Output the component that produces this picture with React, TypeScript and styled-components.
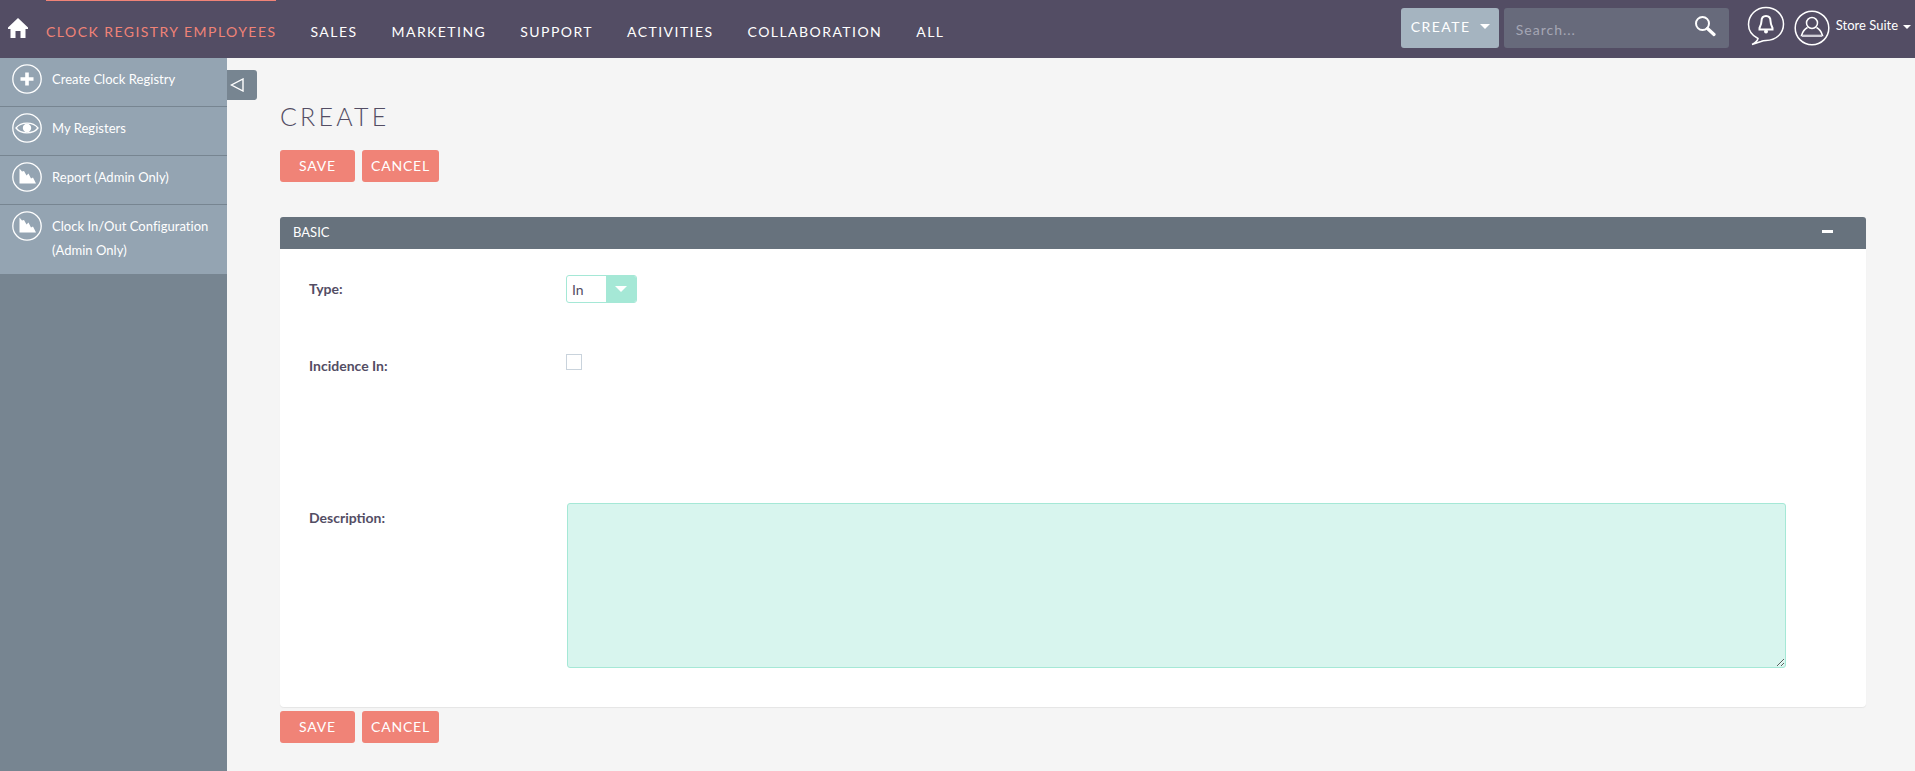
import React from 'react';
import styled, { createGlobalStyle } from 'styled-components';

const GlobalStyle = createGlobalStyle`
    html, body {
        margin: 0;
        padding: 0;
        background: #f5f5f5;
        font-family: Lato, "Liberation Sans", sans-serif;
    }
    * {
        box-sizing: border-box;
    }
`;

const Page = styled.div`
    width: 1915px;
    height: 771px;
    display: flex;
    flex-direction: column;
    overflow: hidden;
`;

const TopBar = styled.header`
    height: 58px;
    flex-shrink: 0;
    background: #534d64;
    display: flex;
    align-items: stretch;
`;

const HomeLink = styled.a`
    width: 46px;
    padding: 18px 0 0 8px;
    flex-shrink: 0;
`;

const NavList = styled.nav`
    display: flex;
    align-items: stretch;
    flex: 1;
`;

const NavItem = styled.a<{ $active?: boolean }>`
    display: block;
    height: 58px;
    margin-right: 34px;
    padding-top: 22px;
    font-size: 14px;
    line-height: 18px;
    font-weight: 400;
    letter-spacing: 1.45px;
    white-space: nowrap;
    color: ${(p) => (p.$active ? '#f08377' : '#fff')};
    border-top: ${(p) => (p.$active ? '1px solid #f08377' : '1px solid transparent')};
`;

const TopActions = styled.div`
    display: flex;
    align-items: flex-start;
    padding-top: 8px;
`;

const CreateButton = styled.button`
    width: 98px;
    height: 40px;
    border: 0;
    border-radius: 3px;
    background: #a5b4c0;
    color: #fff;
    font-family: inherit;
    font-size: 14px;
    letter-spacing: 1.45px;
    display: flex;
    align-items: center;
    padding: 0 0 3px 10px;
`;

const Caret = styled.span<{ $size: number; $color: string }>`
    display: inline-block;
    width: 0;
    height: 0;
    border-left: ${(p) => p.$size}px solid transparent;
    border-right: ${(p) => p.$size}px solid transparent;
    border-top: ${(p) => p.$size}px solid ${(p) => p.$color};
`;

const CreateCaret = styled(Caret)`
    margin-left: 9px;
`;

const SearchBox = styled.div`
    width: 225px;
    height: 40px;
    margin-left: 5px;
    border-radius: 3px;
    background: #676a7b;
    display: flex;
    align-items: center;
    justify-content: space-between;
    padding: 0 13px 0 12px;
`;

const SearchText = styled.span`
    font-size: 14px;
    letter-spacing: 1px;
    color: #a5a6b4;
    margin-top: 2px;
`;

const SearchIcon = styled.svg`
    display: block;
    margin-top: -4px;
`;

const BellIcon = styled.svg`
    display: block;
    margin: -2px 0 0 18px;
`;

const UserIcon = styled.svg`
    display: block;
    margin: 2px 0 0 9px;
`;

const UserName = styled.div`
    display: flex;
    align-items: center;
    margin: 9px 4px 0 6px;
    font-size: 13px;
    line-height: 16px;
    color: #fff;
    white-space: nowrap;
`;

const UserCaret = styled(Caret)`
    margin: 3px 0 0 5px;
`;

const Body = styled.div`
    flex: 1;
    display: flex;
    min-height: 0;
`;

const Sidebar = styled.aside`
    width: 227px;
    flex-shrink: 0;
    background: #778591;
`;

const SideItem = styled.a<{ $tall?: boolean }>`
    display: flex;
    align-items: flex-start;
    min-height: ${(p) => (p.$tall ? '69px' : '49px')};
    padding: 6px 0 0 12px;
    background: #94a4b2;
    border-bottom: ${(p) => (p.$tall ? '0' : '1px solid #778591')};
`;

const SideCircle = styled.svg`
    display: block;
    flex-shrink: 0;
`;

const SideLabel = styled.span`
    margin: 0 0 0 10px;
    padding-top: 3px;
    font-size: 13px;
    line-height: 24px;
    letter-spacing: 0.03px;
    color: #fff;
`;

const Main = styled.main`
    flex: 1;
    min-width: 0;
    display: flex;
    flex-direction: column;
    padding: 12px 47px 0 0;
`;

const Toggle = styled.button`
    width: 30px;
    height: 30px;
    flex-shrink: 0;
    padding: 0 0 0 3px;
    border: 0;
    border-radius: 0 3px 3px 0;
    background: #778591;
    display: flex;
    align-items: center;
`;

const Content = styled.div`
    padding-left: 53px;
`;

const Title = styled.h2`
    margin: 0;
    height: 50px;
    font-size: 25px;
    line-height: 32px;
    font-weight: 300;
    letter-spacing: 3.2px;
    color: #534d64;
`;

const ButtonRow = styled.div`
    display: flex;
    gap: 7px;
`;

const ActionButton = styled.button<{ $wide?: boolean }>`
    width: ${(p) => (p.$wide ? '77px' : '75px')};
    height: 32px;
    padding: 0 0 1px;
    border: 0;
    border-radius: 3px;
    background: #f08377;
    color: #fff;
    font-family: inherit;
    font-size: 14px;
    letter-spacing: 0.8px;
`;

const Panel = styled.section`
    margin: 35px 2px 4px 0;
    height: 490px;
    background: #fff;
    border-radius: 4px;
    box-shadow: 0 1px 1px #e5e5e5;
    display: flex;
    flex-direction: column;
`;

const PanelHeader = styled.div`
    height: 32px;
    flex-shrink: 0;
    padding: 0 33px 3px 13px;
    border-radius: 3px 3px 0 0;
    background: #67727d;
    color: #fff;
    font-size: 13px;
    display: flex;
    align-items: center;
    justify-content: space-between;
`;

const Dash = styled.span`
    width: 11px;
    height: 3px;
    background: #fff;
`;

const FormRow = styled.div<{ $height: number }>`
    height: ${(p) => p.$height}px;
    padding-left: 29px;
    display: flex;
    align-items: flex-start;
`;

const TypeRow = styled(FormRow)`
    padding-top: 26px;
`;

const IncidenceRow = styled(FormRow)`
    padding-top: 12px;
`;

const Label = styled.label<{ $offset: number }>`
    width: 257px;
    flex-shrink: 0;
    padding-top: ${(p) => p.$offset}px;
    font-size: 14px;
    line-height: 18px;
    font-weight: 700;
    color: #534d64;
`;

const SelectBox = styled.div`
    width: 71px;
    height: 28px;
    border: 1px solid #a5e8d6;
    border-radius: 3px;
    background: #fff;
    display: flex;
    justify-content: space-between;
    font-size: 14px;
    line-height: 27px;
    color: #534d64;
    overflow: hidden;
    padding-left: 5px;
`;

const SelectArrow = styled.span`
    width: 30px;
    background: #a5e8d6;
    display: flex;
    align-items: center;
    justify-content: center;
`;

const CheckBox = styled.span`
    display: block;
    width: 16px;
    height: 16px;
    border: 1px solid #c9d3dc;
    background: #fff;
`;

const TextArea = styled.textarea`
    display: block;
    width: 1219px;
    height: 165px;
    margin: -1px 0 0 1px;
    border: 1px solid #a5e8d6;
    border-radius: 3px;
    background: #d8f5ee;
    outline: 0;
`;

const ChartGlyph = () => (
    <path d="M7.500 6.500 L10 9.500 L12 9 L14.500 13.500 L16.500 11.500 L19 16.500 L21 15.500 L24 21.500 H7.500 Z" fill="#fff" />
);

const Ring = () => <circle cx="15" cy="15" r="14.200" fill="none" stroke="#fff" strokeWidth="1.300" />;

const sideItems = [
    {
        label: 'Create Clock Registry',
        glyph: <path d="M13.200 8.500h3.600v4.700h4.700v3.600h-4.700v4.700h-3.600v-4.700H8.500v-3.600h4.700z" fill="#fff" />,
    },
    {
        label: 'My Registers',
        glyph: (
            <>
                <path d="M4 15 C9 8.500 21 8.500 26 15 C21 21.500 9 21.500 4 15 Z" fill="none" stroke="#fff" strokeWidth="1.300" />
                <circle cx="15" cy="15" r="4.200" fill="#fff" />
            </>
        ),
    },
    { label: 'Report (Admin Only)', glyph: <ChartGlyph /> },
];

const App = () => {
    return (
        <Page>
            <GlobalStyle />
            <TopBar>
                <HomeLink>
                    <svg width="20" height="20" viewBox="0 0 20 20">
                        <path d="M10 0 L20 9.500 V11 H17.500 V20 H12.500 V13 H7.500 V20 H2.500 V11 H0 V9.500 Z" fill="#fff" />
                    </svg>
                </HomeLink>
                <NavList>
                    <NavItem $active>CLOCK REGISTRY EMPLOYEES</NavItem>
                    <NavItem>SALES</NavItem>
                    <NavItem>MARKETING</NavItem>
                    <NavItem>SUPPORT</NavItem>
                    <NavItem>ACTIVITIES</NavItem>
                    <NavItem>COLLABORATION</NavItem>
                    <NavItem>ALL</NavItem>
                </NavList>
                <TopActions>
                    <CreateButton>
                        CREATE
                        <CreateCaret $size={5} $color="#fff" />
                    </CreateButton>
                    <SearchBox>
                        <SearchText>Search...</SearchText>
                        <SearchIcon width="22" height="22" viewBox="0 0 22 22">
                            <circle cx="8.500" cy="8.500" r="6.500" fill="none" stroke="#fff" strokeWidth="2" />
                            <path d="M13.500 13.500 L20 19.500" stroke="#fff" strokeWidth="3.200" strokeLinecap="round" />
                        </SearchIcon>
                    </SearchBox>
                    <BellIcon width="38" height="40" viewBox="0 0 38 40">
                        <path
                            d="M11 32.500 C5 29.500 1.500 24.500 1.500 18.500 C1.500 9 9 1.500 19 1.500 C29 1.500 36.500 9 36.500 18 C36.500 27.500 29 34.500 19 34.500 C17 34.500 15.500 34.800 14 35.500 L5 38.500 C8 37 10.500 35 11 32.500 Z"
                            fill="none"
                            stroke="#fff"
                            strokeWidth="1.500"
                        />
                        <path
                            d="M19 10 C22 10 23.500 12 23.500 15 C23.500 18 24.500 20 25.500 22 V23.500 H12.500 V22 C13.500 20 14.500 18 14.500 15 C14.500 12 16 10 19 10 Z"
                            fill="none"
                            stroke="#fff"
                            strokeWidth="2"
                        />
                        <circle cx="19" cy="25.500" r="2" fill="#fff" />
                    </BellIcon>
                    <UserIcon width="36" height="36" viewBox="0 0 36 36">
                        <circle cx="18" cy="18" r="16.800" fill="none" stroke="#fff" strokeWidth="1.500" />
                        <circle cx="18" cy="13" r="5.500" fill="none" stroke="#fff" strokeWidth="1.500" />
                        <path
                            d="M13.500 17.500 C10.500 19 8.500 22 7.500 25.500 H28.500 C27.500 22 25.500 19 22.500 17.500"
                            fill="none"
                            stroke="#fff"
                            strokeWidth="1.500"
                        />
                        <path d="M8 25 H28 V27 H8 Z" fill="#cfcdd6" />
                    </UserIcon>
                    <UserName>
                        Store Suite
                        <UserCaret $size={4} $color="#fff" />
                    </UserName>
                </TopActions>
            </TopBar>
            <Body>
                <Sidebar>
                    {sideItems.map((item) => (
                        <SideItem key={item.label}>
                            <SideCircle width="30" height="30" viewBox="0 0 30 30">
                                <Ring />
                                {item.glyph}
                            </SideCircle>
                            <SideLabel>{item.label}</SideLabel>
                        </SideItem>
                    ))}
                    <SideItem $tall>
                        <SideCircle width="30" height="30" viewBox="0 0 30 30">
                            <Ring />
                            <ChartGlyph />
                        </SideCircle>
                        <SideLabel>
                            Clock In/Out Configuration
                            <br />
                            (Admin Only)
                        </SideLabel>
                    </SideItem>
                </Sidebar>
                <Main>
                    <Toggle>
                        <svg width="14" height="14" viewBox="0 0 14 14">
                            <path d="M13 1 V13 L1.500 7 Z" fill="none" stroke="#fff" strokeWidth="1.400" />
                        </svg>
                    </Toggle>
                    <Content>
                        <Title>CREATE</Title>
                        <ButtonRow>
                            <ActionButton>SAVE</ActionButton>
                            <ActionButton $wide>CANCEL</ActionButton>
                        </ButtonRow>
                        <Panel>
                            <PanelHeader>
                                BASIC
                                <Dash />
                            </PanelHeader>
                            <TypeRow $height={93}>
                                <Label $offset={5}>Type:</Label>
                                <SelectBox>
                                    In
                                    <SelectArrow>
                                        <Caret $size={6} $color="#fff" />
                                    </SelectArrow>
                                </SelectBox>
                            </TypeRow>
                            <IncidenceRow $height={162}>
                                <Label $offset={3}>Incidence In:</Label>
                                <CheckBox />
                            </IncidenceRow>
                            <FormRow $height={170}>
                                <Label $offset={5}>Description:</Label>
                                <TextArea />
                            </FormRow>
                        </Panel>
                        <ButtonRow>
                            <ActionButton>SAVE</ActionButton>
                            <ActionButton $wide>CANCEL</ActionButton>
                        </ButtonRow>
                    </Content>
                </Main>
            </Body>
        </Page>
    );
};

export default App;
